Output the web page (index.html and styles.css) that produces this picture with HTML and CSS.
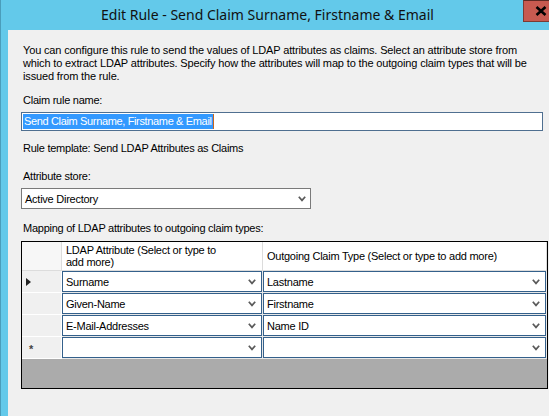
FILE: index.html
```html
<!DOCTYPE html>
<html>
<head>
<meta charset="utf-8">
<link rel="stylesheet" href="styles.css">
</head>
<body>
<div class="window">
  <header class="titlebar">
    <div class="title">Edit Rule - Send Claim Surname, Firstname &amp; Email</div>
    <div class="close"><svg width="12" height="10" viewBox="0 0 12 10"><path d="M1.5 1 L10.5 9 M10.5 1 L1.5 9" stroke="#000" stroke-width="2.6" fill="none"/></svg></div>
  </header>
  <main class="content">
    <p class="intro">You can configure this rule to send the values of LDAP attributes as claims. Select an attribute store from<br>which to extract LDAP attributes. Specify how the attributes will map to the outgoing claim types that will be<br>issued from the rule.</p>

    <label class="label label-name">Claim rule name:</label>
    <div class="textbox"><span class="selected">Send Claim Surname, Firstname &amp; Email</span></div>

    <div class="label label-template">Rule template: Send LDAP Attributes as Claims</div>

    <label class="label label-store">Attribute store:</label>
    <div class="select"><span>Active Directory</span><svg class="chev" width="8" height="6" viewBox="0 0 8 6"><path d="M0.8 0.8 L4 4.4 L7.2 0.8" stroke="#5a5a5a" stroke-width="1.7" fill="none"/></svg></div>

    <div class="label label-map">Mapping of LDAP attributes to outgoing claim types:</div>

    <div class="grid">
      <div class="head corner"></div>
      <div class="head col">LDAP Attribute (Select or type to<br>add more)</div>
      <div class="head col">Outgoing Claim Type (Select or type to add more)</div>

      <div class="rowhead"><svg width="5" height="8" viewBox="0 0 5 8"><path d="M0 0 L5 4 L0 8 Z" fill="#222"/></svg></div>
      <div class="cell"><div class="combo"><span>Surname</span><svg class="chev" width="8" height="6" viewBox="0 0 8 6"><path d="M0.8 0.8 L4 4.4 L7.2 0.8" stroke="#5a5a5a" stroke-width="1.7" fill="none"/></svg></div></div>
      <div class="cell"><div class="combo"><span>Lastname</span><svg class="chev" width="8" height="6" viewBox="0 0 8 6"><path d="M0.8 0.8 L4 4.4 L7.2 0.8" stroke="#5a5a5a" stroke-width="1.7" fill="none"/></svg></div></div>

      <div class="rowhead"></div>
      <div class="cell"><div class="combo"><span>Given-Name</span><svg class="chev" width="8" height="6" viewBox="0 0 8 6"><path d="M0.8 0.8 L4 4.4 L7.2 0.8" stroke="#5a5a5a" stroke-width="1.7" fill="none"/></svg></div></div>
      <div class="cell"><div class="combo"><span>Firstname</span><svg class="chev" width="8" height="6" viewBox="0 0 8 6"><path d="M0.8 0.8 L4 4.4 L7.2 0.8" stroke="#5a5a5a" stroke-width="1.7" fill="none"/></svg></div></div>

      <div class="rowhead"></div>
      <div class="cell"><div class="combo"><span>E-Mail-Addresses</span><svg class="chev" width="8" height="6" viewBox="0 0 8 6"><path d="M0.8 0.8 L4 4.4 L7.2 0.8" stroke="#5a5a5a" stroke-width="1.7" fill="none"/></svg></div></div>
      <div class="cell"><div class="combo"><span>Name ID</span><svg class="chev" width="8" height="6" viewBox="0 0 8 6"><path d="M0.8 0.8 L4 4.4 L7.2 0.8" stroke="#5a5a5a" stroke-width="1.7" fill="none"/></svg></div></div>

      <div class="rowhead"><span class="star">*</span></div>
      <div class="cell"><div class="combo"><span></span><svg class="chev" width="8" height="6" viewBox="0 0 8 6"><path d="M0.8 0.8 L4 4.4 L7.2 0.8" stroke="#5a5a5a" stroke-width="1.7" fill="none"/></svg></div></div>
      <div class="cell"><div class="combo"><span></span><svg class="chev" width="8" height="6" viewBox="0 0 8 6"><path d="M0.8 0.8 L4 4.4 L7.2 0.8" stroke="#5a5a5a" stroke-width="1.7" fill="none"/></svg></div></div>

      <div class="empty"></div>
    </div>
  </main>
</div>
</body>
</html>
```

FILE: styles.css
```css
html, body {
  margin: 0;
  padding: 0;
}

body {
  width: 549px;
  height: 416px;
  overflow: hidden;
  font-family: "Liberation Sans", Arial, sans-serif;
  font-size: 11px;
  color: #000;
}

.window {
  width: 558px;
  height: 416px;
  background: #63c9ea;
  border-left: 1px solid #4a9dbb;
  box-sizing: border-box;
  display: flex;
  flex-direction: column;
}

.titlebar {
  height: 30px;
  flex: none;
  display: flex;
  align-items: flex-start;
}

.title {
  flex: 1;
  height: 30px;
  line-height: 30px;
  text-align: center;
  padding-left: 11px;
  font-family: "Noto Sans", "Open Sans", sans-serif;
  font-size: 14px;
  color: #111;
  white-space: nowrap;
}

.close {
  flex: none;
  width: 33px;
  height: 20px;
  background: #c75a50;
  border: 1px solid #7d3a33;
  border-top-color: #5c2a25;
  display: flex;
  align-items: center;
  justify-content: center;
}

.content {
  flex: 1;
  margin-left: 7px;
  background: #f0f0f0;
  padding: 14px 0 0 13px;
  display: flex;
  flex-direction: column;
  align-items: flex-start;
}

.intro {
  margin: 0 0 0 2px;
  line-height: 13px;
  white-space: nowrap;
  letter-spacing: -0.15px;
}

.label {
  display: block;
  line-height: 13px;
  padding-left: 2px;
  white-space: nowrap;
  letter-spacing: -0.25px;
}

.label-name { margin-top: 11px; }
.label-template { margin-top: 11px; }
.label-store { margin-top: 15px; }
.label-map { margin-top: 13px; }

.textbox {
  margin-top: 5px;
  width: 522px;
  height: 19px;
  box-sizing: border-box;
  background: #fff;
  border: 1px solid #4f6f90;
  padding: 1px 0 0 1px;
  display: flex;
  align-items: flex-start;
}

.selected {
  background: #3399ff;
  color: #fff;
  line-height: 15px;
  padding: 0 1px;
  border-right: 1px solid #c8661e;
  white-space: nowrap;
  letter-spacing: -0.35px;
}

.select {
  margin-top: 5px;
  width: 290px;
  height: 21px;
  box-sizing: border-box;
  background: #fff;
  border: 1px solid #7a7a7a;
  padding: 0 4px 0 3px;
  display: flex;
  align-items: center;
  justify-content: space-between;
  letter-spacing: -0.25px;
}

.chev {
  display: block;
  flex: none;
}

.grid {
  margin-top: 6px;
  width: 527px;
  height: 148px;
  box-sizing: border-box;
  border: 1px solid #000;
  display: grid;
  grid-template-columns: 40px 201px 1fr;
  grid-template-rows: 29px repeat(4, 22px) 1fr;
  background: #ababab;
}

.head {
  background: #fff;
  border-right: 1px solid #dcdcdc;
  border-bottom: 1px solid #dcdcdc;
  box-sizing: border-box;
}

.head.corner {
  background: #f7f7f7;
}

.head.col {
  display: flex;
  align-items: center;
  padding-left: 4px;
  line-height: 12px;
  white-space: nowrap;
  letter-spacing: -0.25px;
}

.rowhead {
  background: #f0f0f0;
  border-bottom: 1px solid #fff;
  border-right: 1px solid #fff;
  box-sizing: border-box;
  display: flex;
  align-items: center;
  padding-left: 4px;
}

.star {
  font-size: 11px;
  font-weight: bold;
  color: #444;
  padding-left: 3px;
  line-height: 11px;
  margin-top: 4px;
}

.cell {
  background: #e8e8e8;
  padding: 0 1px 1px 0;
  box-sizing: border-box;
}

.combo {
  height: 100%;
  box-sizing: border-box;
  background: #fff;
  border: 1px solid #34608b;
  display: flex;
  align-items: center;
  justify-content: space-between;
  padding: 0 5px 0 3px;
  white-space: nowrap;
  letter-spacing: -0.25px;
}

.empty {
  grid-column: 1 / -1;
  background: #ababab;
}
```
